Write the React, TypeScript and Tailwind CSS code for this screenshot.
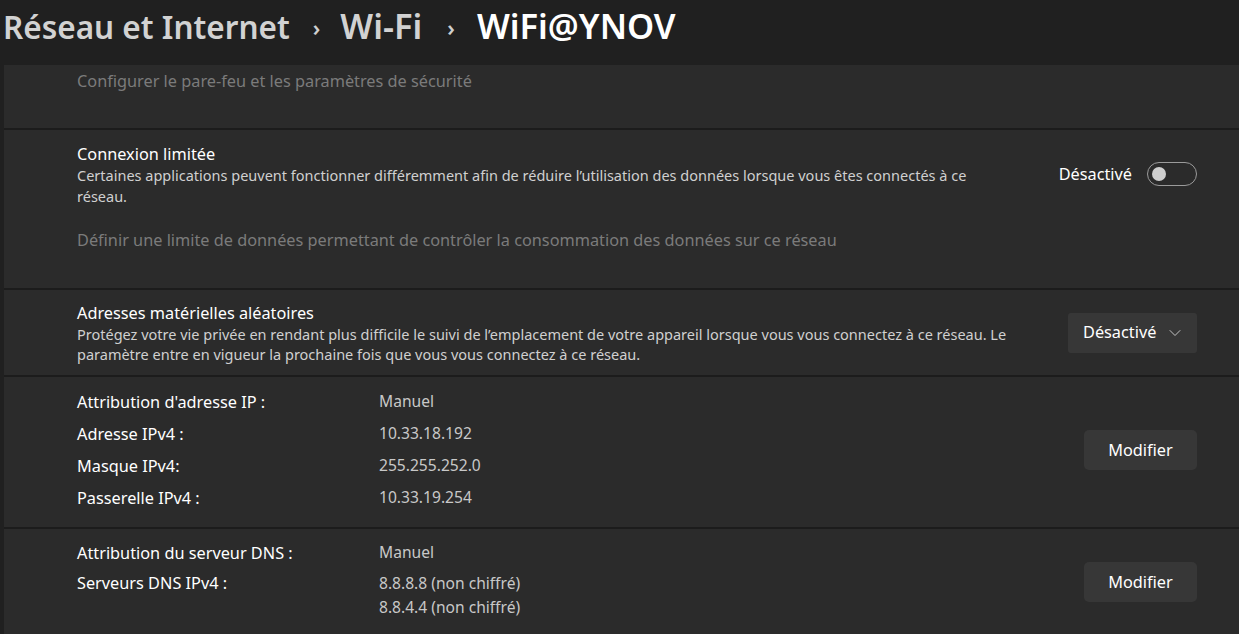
import { ChevronDown } from 'lucide-react';

// ─── Data ─────────────────────────────────────

const ipRows = [
  { label: "Attribution d'adresse IP :", value: 'Manuel' },
  { label: 'Adresse IPv4 :', value: '10.33.18.192' },
  { label: 'Masque IPv4:', value: '255.255.252.0' },
  { label: 'Passerelle IPv4 :', value: '10.33.19.254' },
];

const font = { fontFamily: '"Noto Sans", "Open Sans", sans-serif' };

// ─── Pieces ───────────────────────────────────

function Toggle() {
  return (
    <div className="flex h-[24px] w-[50px] items-center rounded-full border border-[#9b9b9b] px-[4px]">
      <div className="h-[14px] w-[14px] rounded-full bg-[#cfcfcf]" />
    </div>
  );
}

function Button({ children }: { children: React.ReactNode }) {
  return (
    <button className="flex h-[40px] w-[113px] items-center justify-center rounded-[5px] bg-[#373737] text-[16.3px] text-white">
      {children}
    </button>
  );
}

// ─── App ──────────────────────────────────────

export default function App() {
  return (
    <div className="h-[634px] w-[1239px] overflow-hidden bg-[#202020]" style={font}>
      {/* Breadcrumb */}
      <header className="flex h-[65px] items-center pl-[3px] pb-[12px] text-[31.5px] font-semibold leading-none">
        <span className="text-[#d2d2d2]">Réseau et Internet</span>
        <span className="ml-[23px] mr-[20px] text-[22px] text-[#cfcfcf]">›</span>
        <span className="text-[34.5px] text-[#d2d2d2]">Wi-Fi</span>
        <span className="ml-[25px] mr-[22px] text-[22px] text-[#cfcfcf]">›</span>
        <span className="text-[34.5px] text-white">WiFi@YNOV</span>
      </header>

      <div className="ml-[4px] flex flex-col gap-[2px] bg-[#1c1c1c]">
        {/* Firewall (cut off) */}
        <section className="h-[63px] bg-[#2b2b2b] pl-[73px] pt-[4px]">
          <p className="text-[16.3px] text-[#7b7b7b]">Configurer le pare-feu et les paramètres de sécurité</p>
        </section>

        {/* Metered connection */}
        <section className="h-[158px] bg-[#2b2b2b] pl-[73px] pr-[42px] pt-[13px]">
          <div className="flex items-start justify-between">
            <div className="w-[935px]">
              <p className="text-[16.3px] leading-[22px] text-white">Connexion limitée</p>
              <p className="text-[14.5px] leading-[21px] text-[#d0d0d0]">
                Certaines applications peuvent fonctionner différemment afin de réduire l’utilisation des données lorsque vous êtes connectés à ce réseau.
              </p>
            </div>
            <div className="mt-[19px] flex items-center gap-[15px]">
              <span className="text-[16.3px] text-white">Désactivé</span>
              <Toggle />
            </div>
          </div>
          <p className="mt-[21px] text-[16.3px] text-[#7b7b7b]">
            Définir une limite de données permettant de contrôler la consommation des données sur ce réseau
          </p>
        </section>

        {/* Random hardware addresses */}
        <section className="flex h-[85px] items-center justify-between bg-[#2b2b2b] pl-[73px] pr-[42px]">
          <div className="w-[935px]">
            <p className="text-[16.3px] leading-[22px] text-white">Adresses matérielles aléatoires</p>
            <p className="text-[14.5px] leading-[20px] text-[#d0d0d0]">
              Protégez votre vie privée en rendant plus difficile le suivi de l’emplacement de votre appareil lorsque vous vous connectez à ce réseau. Le paramètre entre en vigueur la prochaine fois que vous vous connectez à ce réseau.
            </p>
          </div>
          <div className="flex h-[40px] w-[129px] items-center justify-between rounded-[3px] bg-[#373737] pl-[15px] pr-[12px]">
            <span className="text-[16.3px] text-white">Désactivé</span>
            <ChevronDown size={20} strokeWidth={1.1} className="text-[#cfcfcf]" />
          </div>
        </section>

        {/* IP settings */}
        <section className="flex h-[150px] items-center justify-between bg-[#2b2b2b] pb-[4px] pl-[73px] pr-[42px]">
          <div className="flex flex-col">
            {ipRows.map((r) => (
              <div key={r.label} className="flex h-[32px] items-center">
                <span className="w-[302px] text-[16.3px] text-white">{r.label}</span>
                <span className="text-[15.6px] text-[#c8c8c8]">{r.value}</span>
              </div>
            ))}
          </div>
          <Button>Modifier</Button>
        </section>

        {/* DNS settings */}
        <section className="flex h-[110px] items-start justify-between bg-[#2b2b2b] pl-[73px] pr-[42px] pt-[10px]">
          <div className="flex flex-col">
            <div className="flex h-[28px] items-center">
              <span className="w-[302px] text-[16.3px] text-white">Attribution du serveur DNS :</span>
              <span className="text-[15.6px] text-[#c8c8c8]">Manuel</span>
            </div>
            <div className="flex pt-[4px]">
              <span className="w-[302px] text-[16.3px] leading-[24px] text-white">Serveurs DNS IPv4 :</span>
              <div className="flex flex-col text-[15.6px] leading-[24px] text-[#c8c8c8]">
                <span>8.8.8.8 (non chiffré)</span>
                <span>8.8.4.4 (non chiffré)</span>
              </div>
            </div>
          </div>
          <div className="mt-[23px]">
            <Button>Modifier</Button>
          </div>
        </section>
      </div>
    </div>
  );
}
